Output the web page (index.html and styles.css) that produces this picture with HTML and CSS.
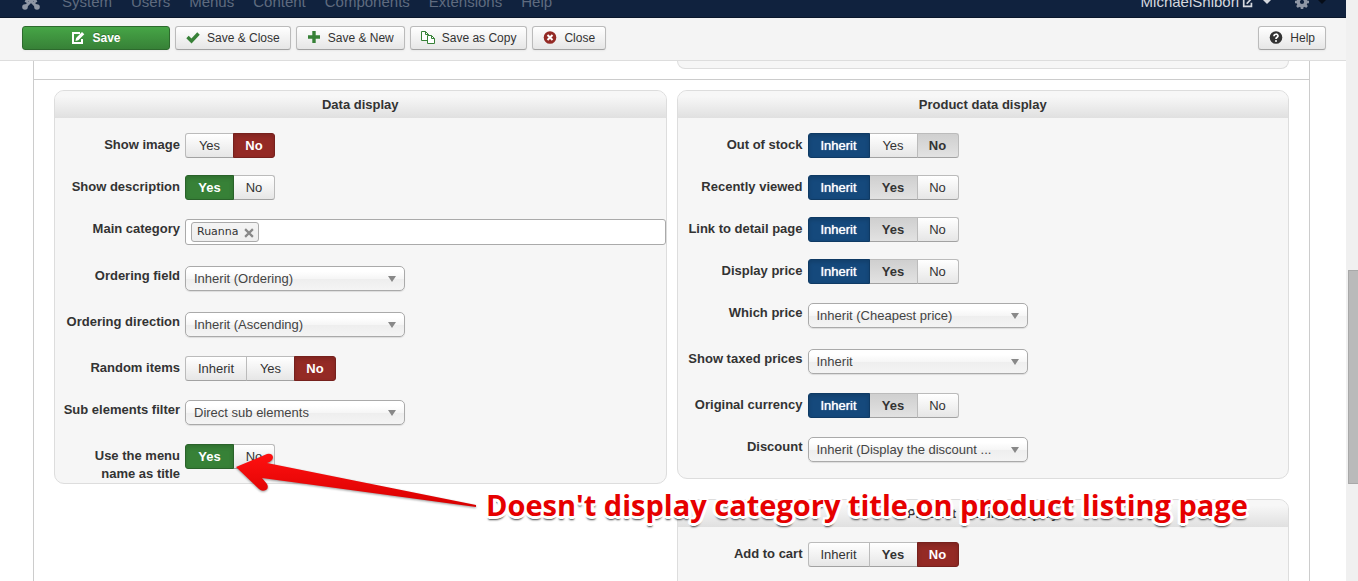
FILE: index.html
```html
<!DOCTYPE html>
<html lang="en">
<head>
    <meta charset="UTF-8">
    <meta name="viewport" content="width=device-width, initial-scale=1.0">
    <title>Menu item options</title>
    <link rel="stylesheet" href="styles.css">
</head>
<body>
    <div class="page">
        <nav class="navbar">
            <a href="#" class="logo" aria-label="Home">
                <svg width="18" height="18" viewBox="0 0 18 18" fill="none" stroke="#8f97a5" stroke-width="3"><path d="M3 15 14 4M15 15 4 4M4 10.500 7 4h4l3 6.500"/><g fill="#8f97a5" stroke="none"><circle cx="3" cy="15" r="2.800"/><circle cx="15" cy="15" r="2.800"/><circle cx="3" cy="3" r="2.800"/><circle cx="15" cy="3" r="2.800"/></g></svg>
            </a>
            <a href="#">System</a>
            <a href="#">Users</a>
            <a href="#">Menus</a>
            <a href="#">Content</a>
            <a href="#">Components</a>
            <a href="#">Extensions</a>
            <a href="#">Help</a>
            <div class="nav-right">
                <a href="#" class="user">MichaelShibori
                    <svg width="12" height="12" viewBox="0 0 14 14" fill="none" stroke="#d5d8de" stroke-width="2"><path d="M8 2H2v10h9V8M5.500 9 12 2"/></svg>
                    <span class="caret"></span>
                </a>
                <a href="#" class="settings" aria-label="Settings">
                    <svg width="14" height="14" viewBox="0 0 14 14" fill="none" stroke="#8f97a5"><circle cx="7" cy="7" r="3.800" stroke-width="3.400"/><path d="M7 0v3M7 11v3M0 7h3M11 7h3M2 2l2 2M10 10l2 2M12 2l-2 2M4 10l-2 2" stroke-width="2.600"/></svg>
                    <span class="caret dark"></span>
                </a>
            </div>
        </nav>

        <div class="toolbar">
            <button class="btn btn-save">
                <svg width="14" height="14" viewBox="0 0 14 14"><path d="M9 2H2v10h9V8" fill="none" stroke="#fff" stroke-width="2"/><path d="M4.500 10l.6-3L11 1l2.300 2.300-6 6z" fill="#fff"/></svg>
                Save
            </button>
            <button class="btn">
                <svg width="14" height="14" viewBox="0 0 14 14"><path d="M1.500 6 5.500 10 12.500 2.500" fill="none" stroke="#378137" stroke-width="3.400"/></svg>
                Save &amp; Close
            </button>
            <button class="btn">
                <svg width="14" height="14" viewBox="0 0 14 14"><path d="M7 0v12M1 6h12" fill="none" stroke="#378137" stroke-width="3.400"/></svg>
                Save &amp; New
            </button>
            <button class="btn">
                <svg width="14" height="14" viewBox="0 0 14 14" stroke="#378137" fill="#fff"><path d="M6 9.500H.500v-9h4l3 3v2"/><path d="M4.500.500v3h3" fill="none"/><path d="M6.500 4.500h4l3 3v5h-7z"/><path d="M10.500 4.500v3h3" fill="none"/></svg>
                Save as Copy
            </button>
            <button class="btn">
                <svg width="14" height="14" viewBox="0 0 14 14"><circle cx="7" cy="6.500" r="6.300" fill="#942a25"/><path d="M4.500 4l5 5M9.500 4l-5 5" stroke="#fff" stroke-width="2"/></svg>
                Close
            </button>
            <button class="btn btn-help">
                <svg width="14" height="14" viewBox="0 0 14 14"><circle cx="7" cy="6.500" r="6.300" fill="#333"/><path d="M5 5.200c0-2.600 4-2.600 4-.2C9 6.400 7 6.200 7 8" fill="none" stroke="#fff" stroke-width="1.700"/><circle cx="7" cy="10" r="1" fill="#fff"/></svg>
                Help
            </button>
        </div>

        <main class="content">
            <div class="columns previous">
                <div></div>
                <div class="panel panel-end"></div>
            </div>

            <div class="columns">
                <div class="column">
                    <section class="panel">
                        <h2>Data display</h2>
                        <div class="rows">
                            <div class="row">
                                <span class="name" id="l-image">Show image</span>
                                <div class="toggle" role="radiogroup" aria-labelledby="l-image">
                                    <input type="radio" name="image" id="image-yes"><label for="image-yes">Yes</label>
                                    <input type="radio" name="image" id="image-no" checked><label for="image-no" class="no">No</label>
                                </div>
                            </div>
                            <div class="row">
                                <span class="name" id="l-desc">Show description</span>
                                <div class="toggle" role="radiogroup" aria-labelledby="l-desc">
                                    <input type="radio" name="desc" id="desc-yes" checked><label for="desc-yes" class="yes">Yes</label>
                                    <input type="radio" name="desc" id="desc-no"><label for="desc-no">No</label>
                                </div>
                            </div>
                            <div class="row row-tags">
                                <label class="name" for="category">Main category</label>
                                <div class="tags">
                                    <span class="tag">Ruanna
                                        <button aria-label="Remove Ruanna"><svg width="10" height="10" viewBox="0 0 9 9" stroke="#888" stroke-width="2"><path d="M1 1l7 7M8 1 1 8"/></svg></button>
                                    </span>
                                    <input type="text" id="category">
                                </div>
                            </div>
                            <div class="row row-select">
                                <label class="name" for="field">Ordering field</label>
                                <div class="select"><select id="field"><option>Inherit (Ordering)</option></select></div>
                            </div>
                            <div class="row row-select">
                                <label class="name" for="direction">Ordering direction</label>
                                <div class="select"><select id="direction"><option>Inherit (Ascending)</option></select></div>
                            </div>
                            <div class="row">
                                <span class="name" id="l-random">Random items</span>
                                <div class="toggle" role="radiogroup" aria-labelledby="l-random">
                                    <input type="radio" name="random" id="random-inherit"><label for="random-inherit">Inherit</label>
                                    <input type="radio" name="random" id="random-yes"><label for="random-yes">Yes</label>
                                    <input type="radio" name="random" id="random-no" checked><label for="random-no" class="no">No</label>
                                </div>
                            </div>
                            <div class="row row-select">
                                <label class="name" for="filter">Sub elements filter</label>
                                <div class="select"><select id="filter"><option>Direct sub elements</option></select></div>
                            </div>
                            <div class="row">
                                <span class="name" id="l-title">Use the menu name as title</span>
                                <div class="toggle" role="radiogroup" aria-labelledby="l-title">
                                    <input type="radio" name="title" id="title-yes" checked><label for="title-yes" class="yes">Yes</label>
                                    <input type="radio" name="title" id="title-no"><label for="title-no">No</label>
                                </div>
                            </div>
                        </div>
                    </section>
                </div>

                <div class="column">
                    <section class="panel">
                        <h2>Product data display</h2>
                        <div class="rows">
                            <div class="row">
                                <span class="name" id="l-stock">Out of stock</span>
                                <div class="toggle" role="radiogroup" aria-labelledby="l-stock">
                                    <input type="radio" name="stock" id="stock-inherit" checked><label for="stock-inherit">Inherit</label>
                                    <input type="radio" name="stock" id="stock-yes"><label for="stock-yes">Yes</label>
                                    <input type="radio" name="stock" id="stock-no"><label for="stock-no" class="default">No</label>
                                </div>
                            </div>
                            <div class="row">
                                <span class="name" id="l-recent">Recently viewed</span>
                                <div class="toggle" role="radiogroup" aria-labelledby="l-recent">
                                    <input type="radio" name="recent" id="recent-inherit" checked><label for="recent-inherit">Inherit</label>
                                    <input type="radio" name="recent" id="recent-yes"><label for="recent-yes" class="default">Yes</label>
                                    <input type="radio" name="recent" id="recent-no"><label for="recent-no">No</label>
                                </div>
                            </div>
                            <div class="row">
                                <span class="name" id="l-link">Link to detail page</span>
                                <div class="toggle" role="radiogroup" aria-labelledby="l-link">
                                    <input type="radio" name="link" id="link-inherit" checked><label for="link-inherit">Inherit</label>
                                    <input type="radio" name="link" id="link-yes"><label for="link-yes" class="default">Yes</label>
                                    <input type="radio" name="link" id="link-no"><label for="link-no">No</label>
                                </div>
                            </div>
                            <div class="row">
                                <span class="name" id="l-price">Display price</span>
                                <div class="toggle" role="radiogroup" aria-labelledby="l-price">
                                    <input type="radio" name="price" id="price-inherit" checked><label for="price-inherit">Inherit</label>
                                    <input type="radio" name="price" id="price-yes"><label for="price-yes" class="default">Yes</label>
                                    <input type="radio" name="price" id="price-no"><label for="price-no">No</label>
                                </div>
                            </div>
                            <div class="row row-select">
                                <label class="name" for="which">Which price</label>
                                <div class="select"><select id="which"><option>Inherit (Cheapest price)</option></select></div>
                            </div>
                            <div class="row row-select">
                                <label class="name" for="taxed">Show taxed prices</label>
                                <div class="select"><select id="taxed"><option>Inherit</option></select></div>
                            </div>
                            <div class="row">
                                <span class="name" id="l-currency">Original currency</span>
                                <div class="toggle" role="radiogroup" aria-labelledby="l-currency">
                                    <input type="radio" name="currency" id="currency-inherit" checked><label for="currency-inherit">Inherit</label>
                                    <input type="radio" name="currency" id="currency-yes"><label for="currency-yes" class="default">Yes</label>
                                    <input type="radio" name="currency" id="currency-no"><label for="currency-no">No</label>
                                </div>
                            </div>
                            <div class="row row-select">
                                <label class="name" for="discount">Discount</label>
                                <div class="select"><select id="discount"><option>Inherit (Display the discount ...</option></select></div>
                            </div>
                        </div>
                    </section>

                    <section class="panel panel-long">
                        <h2>Product features display</h2>
                        <div class="rows">
                            <div class="row">
                                <span class="name" id="l-cart">Add to cart</span>
                                <div class="toggle" role="radiogroup" aria-labelledby="l-cart">
                                    <input type="radio" name="cart" id="cart-inherit"><label for="cart-inherit">Inherit</label>
                                    <input type="radio" name="cart" id="cart-yes"><label for="cart-yes" class="strong">Yes</label>
                                    <input type="radio" name="cart" id="cart-no" checked><label for="cart-no" class="no">No</label>
                                </div>
                            </div>
                        </div>
                    </section>
                </div>
            </div>
        </main>
    </div>

    <div class="scrollbar"><div class="thumb"></div></div>

    <!-- note drawn over the form -->
    <svg class="arrow" width="250" height="68" viewBox="0 0 250 68">
        <defs>
            <linearGradient id="red" x1="0" y1="0" x2="0" y2="1">
                <stop offset="0" stop-color="#ff1010"/>
                <stop offset="1" stop-color="#d80000"/>
            </linearGradient>
        </defs>
        <path d="M4 25 35 12q5-1 6 3 0 4-6 6l209 42v2L30 36l5 6q2 4-1 6-4 2-7-1z" fill="url(#red)"/>
    </svg>
    <p class="note">Doesn't display category title on product listing page</p>
</body>
</html>
```
FILE: styles.css
```css
* {
    box-sizing: border-box;
}
body {
    margin: 0;
    height: 100vh;
    display: flex;
    overflow: hidden;
    position: relative;
    font-family: "Liberation Sans", Arial, sans-serif;
    font-size: 13px;
    line-height: 18px;
    color: #333;
    background: #fff;
}
.page {
    flex: 1;
    display: flex;
    flex-direction: column;
    overflow: hidden;
}

/* top bar */
.navbar {
    display: flex;
    flex: none;
    align-items: flex-end;
    gap: 19px;
    height: 18px;
    padding: 0 20px 5px 22px;
    overflow: hidden;
    background: #10223e;
    border-bottom: 1px solid #0a172b;
    font-size: 15px;
    line-height: 20px;
}
.navbar a {
    color: #5f6b7f;
    text-decoration: none;
}
.navbar .logo {
    height: 20px;
    width: 21px;
}
.nav-right {
    display: flex;
    gap: 24px;
    margin-left: auto;
}
.nav-right a {
    display: flex;
    align-items: center;
    gap: 3px;
}
.navbar .user {
    color: #d5d8de;
}
.caret {
    border: 4px solid transparent;
    border-top-color: #d5d8de;
    border-bottom: 0;
    margin-left: 6px;
}
.caret.dark {
    border-top-color: #060d18;
}

/* action buttons */
.toolbar {
    display: flex;
    flex: none;
    gap: 5px;
    height: 43px;
    padding: 8px 20px 0 22px;
    background: #f4f4f4;
    border-bottom: 1px solid #ddd;
}
.btn {
    display: flex;
    align-items: center;
    justify-content: center;
    gap: 7px;
    height: 24px;
    padding: 0 10px;
    border: 1px solid #bbb;
    border-bottom-color: #a2a2a2;
    border-radius: 3px;
    background: linear-gradient(#fff, #e6e6e6);
    box-shadow: 0 1px 2px rgba(0,0,0,0.05);
    font-family: inherit;
    font-size: 12px;
    color: #333;
    cursor: pointer;
}
.btn-save {
    width: 148px;
    border-color: #2d6a2d;
    background: linear-gradient(#46a546, #378137);
    font-weight: bold;
    color: #fff;
    text-shadow: 0 -1px 0 rgba(0,0,0,0.25);
}
.btn-help {
    margin-left: auto;
}

/* form */
.content {
    flex: 1;
    min-height: 0;
    margin: 0 36px 0 33px;
    overflow: hidden;
    border-left: 1px solid #ccc;
    border-right: 1px solid #ccc;
}
.columns {
    display: grid;
    grid-template-columns: 1fr 1fr;
    gap: 10px;
    align-items: start;
    padding: 10px 20px;
}
.previous {
    padding-top: 0;
    border-bottom: 1px solid #ccc;
}
.column {
    display: flex;
    flex-direction: column;
    gap: 20px;
}
.panel {
    border: 1px solid #ddd;
    border-radius: 10px;
    background: #f6f6f6;
}
.panel-end {
    height: 8px;
    border-top: 0;
    border-radius: 0 0 10px 10px;
}
.panel-long {
    min-height: 300px;
}
.panel h2 {
    margin: 0;
    height: 27px;
    border-radius: 9px 9px 0 0;
    background: linear-gradient(#f7f7f7 20%, #e0e0e0);
    font-size: 13px;
    line-height: 27px;
    text-align: center;
}
.rows {
    padding-top: 15px;
}
.row {
    display: flex;
    align-items: flex-start;
    gap: 5px;
    min-height: 42px;
}
.row-select {
    min-height: 46px;
}
.row-tags {
    min-height: 47px;
}
.row:last-child {
    min-height: 39px;
}
.row-select:last-child {
    min-height: 43px;
}
.name {
    width: 125px;
    padding: 3px 0 0 5px;
    font-weight: bold;
    text-align: right;
}

.toggle {
    display: flex;
    position: relative;
}
.toggle input {
    position: absolute;
    opacity: 0;
    margin: 0;
}
.toggle label {
    height: 25px;
    min-width: 42px;
    padding: 0 11px;
    border: 1px solid #bbb;
    border-bottom-color: #a2a2a2;
    background: linear-gradient(#fff, #e6e6e6);
    line-height: 23px;
    text-align: center;
    cursor: pointer;
}
.toggle label[for$="-yes"] {
    min-width: 49px;
}
.toggle label[for$="-inherit"] {
    min-width: 62px;
}
.toggle label + input + label {
    margin-left: -1px;
}
.toggle label:first-of-type {
    border-radius: 3px 0 0 3px;
}
.toggle label:last-of-type {
    border-radius: 0 3px 3px 0;
}
.toggle .default {
    background: linear-gradient(#cfcfcf, #e2e2e2);
    font-weight: bold;
}
.toggle .strong {
    font-weight: bold;
}
.toggle input:checked + label {
    position: relative;
    border-color: #0f3a64;
    background: #15497c;
    box-shadow: inset 0 2px 4px rgba(0,0,0,0.15);
    color: #fff;
    text-shadow: 0 0 1px #fff;
}
.toggle input:checked + .yes {
    border-color: #2a622a;
    background: #378137;
    font-weight: bold;
    text-shadow: none;
}
.toggle input:checked + .no {
    border-color: #76211d;
    background: #942a25;
    font-weight: bold;
    text-shadow: none;
}

.select {
    position: relative;
    width: 220px;
    margin-top: 2px;
}
.select select {
    appearance: none;
    display: block;
    width: 100%;
    height: 25px;
    padding: 0 24px 0 8px;
    border: 1px solid #aaa;
    border-radius: 5px;
    background: linear-gradient(#fff 20%, #f6f6f6 50%, #eee 52%, #f4f4f4);
    box-shadow: 0 1px 1px rgba(0,0,0,0.1);
    font-family: inherit;
    font-size: 13px;
    color: #444;
}
.select::after {
    content: "";
    position: absolute;
    top: 10px;
    right: 9px;
    border: 4px solid transparent;
    border-top: 6px solid #888;
    border-bottom: 0;
    pointer-events: none;
}

.tags {
    display: flex;
    flex: 1;
    align-items: center;
    height: 26px;
    margin-top: 2px;
    padding: 0 5px;
    border: 1px solid #aaa;
    border-radius: 3px;
    background: #fff;
}
.tags input {
    flex: 1;
    min-width: 0;
    border: 0;
    outline: 0;
    background: none;
}
.tag {
    display: flex;
    align-items: center;
    gap: 5px;
    height: 20px;
    padding: 0 4px 0 5px;
    border: 1px solid #aaa;
    border-radius: 3px;
    background: linear-gradient(#f4f4f4, #eee);
    font-family: "DejaVu Sans", Verdana, sans-serif;
    font-size: 11px;
}
.tag button {
    display: flex;
    padding: 2px 0 0;
    border: 0;
    background: none;
}

/* page scrollbar */
.scrollbar {
    display: grid;
    grid-template-rows: 270fr 214fr 97fr;
    width: 12px;
    padding-left: 2px;
    background: #f0f0f0;
}
.thumb {
    grid-row: 2;
    border: 1px solid #a8a8a8;
    border-right: 0;
    background: #bababa;
}

/* note over the form */
.arrow {
    position: absolute;
    left: 232px;
    top: 442px;
    overflow: visible;
    filter: drop-shadow(0 1px 1px rgba(0,0,0,0.4));
}
.note {
    position: absolute;
    left: 486px;
    top: 486px;
    margin: 0;
    font-family: "Open Sans", "Noto Sans", sans-serif;
    font-size: 29px;
    font-weight: bold;
    line-height: 38px;
    white-space: nowrap;
    color: #e60000;
    text-shadow: -2px 0 #fff, 2px 0 #fff, 0 -2px #fff, 0 2px #fff, -2px -2px #fff, 2px -2px #fff, -2px 2px #fff, 2px 2px #fff, 0 3px #fff, 3px 1px #fff, -3px 1px #fff, 0 4px 2px #444;
}
```
